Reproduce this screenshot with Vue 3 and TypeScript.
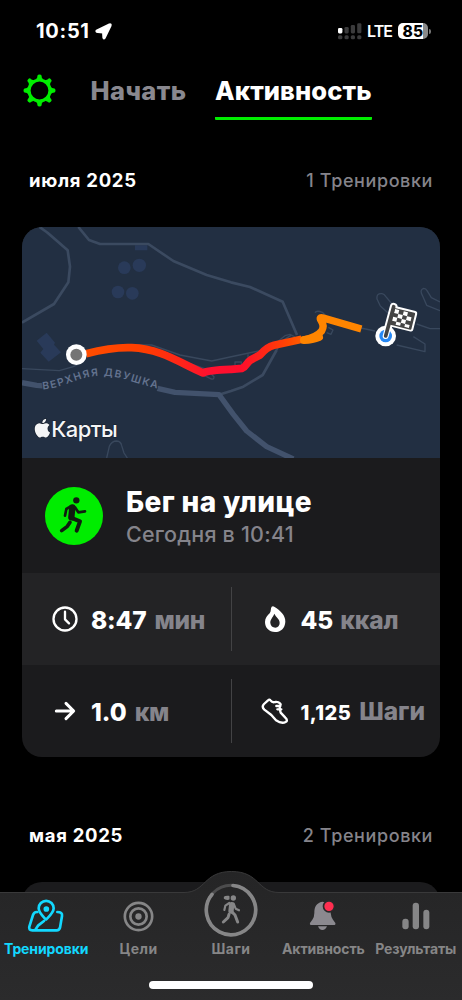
<script setup lang="ts">
interface Tab {
  id: string
  label: string
}

const tabs: Tab[] = [
  { id: 'workouts', label: 'Тренировки' },
  { id: 'goals', label: 'Цели' },
  { id: 'steps', label: 'Шаги' },
  { id: 'activity', label: 'Активность' },
  { id: 'results', label: 'Результаты' },
]
const activeTab = 'workouts'
const gearTeeth: number[] = [0, 45, 90, 135, 180, 225, 270, 315]
</script>

<template>
  <div class="screen">
    <header class="status">
      <span class="time">10:51</span>
      <svg class="locate" viewBox="286 66 52 53"><path d="M290 89 L330 70 Q337 68 334.500 75 L316 113 Q313 118 311 112 L310 96 L294 95 Q287 93 290 89Z" fill="#fff" stroke="#fff" stroke-width="5" stroke-linejoin="round" /></svg>
      <svg class="signal" viewBox="0 0 24 17">
        <rect x="0" y="5" width="4.4" height="5.4" rx="1.3" fill="#fff" />
        <g fill="#3b3b3c">
          <rect x="6.5" y="4" width="4.2" height="6.4" rx="1.3" /><rect x="12.8" y="2" width="4.2" height="8.4" rx="1.3" /><rect x="19.2" y="0.3" width="4.2" height="10" rx="1.3" />
          <rect x="0" y="12.3" width="4.4" height="4" rx="1.5" /><rect x="6.5" y="12.3" width="4.2" height="4" rx="1.5" /><rect x="12.8" y="12.3" width="4.2" height="4" rx="1.5" /><rect x="19.2" y="12.3" width="4.2" height="4" rx="1.5" />
        </g>
      </svg>
      <span class="lte">LTE</span>
      <span class="battery"><b>85</b></span>
      <i class="nub"></i>
    </header>

    <nav class="top">
      <svg class="gear" viewBox="-16.5 -16.5 33 33">
        <circle r="10.5" fill="none" stroke="#00ed00" stroke-width="3.2" />
        <path v-for="a in gearTeeth" :key="a" :transform="`rotate(${a})`" d="M-3.7 -11.2 Q-2 -12 -2 -15 Q-1.6 -16 0 -16 Q1.6 -16 2 -15 Q2 -12 3.7 -11.2Z" fill="#00ed00" />
      </svg>
      <span class="section start">Начать</span>
      <span class="section current">Активность</span>
    </nav>

    <div class="month first"><h2>июля 2025</h2><span>1 Тренировки</span></div>

    <article class="card">
      <svg class="map" viewBox="6 6 1254 693">
        <defs>
          <linearGradient id="pace" gradientUnits="userSpaceOnUse" x1="200" y1="0" x2="860" y2="0">
            <stop offset="0" stop-color="#ff4d00" /><stop offset=".26" stop-color="#ff3d00" />
            <stop offset=".42" stop-color="#ff2618" /><stop offset=".56" stop-color="#ff1030" />
            <stop offset=".7" stop-color="#ff0e2c" /><stop offset=".82" stop-color="#ff2a14" />
            <stop offset=".92" stop-color="#ff4800" /><stop offset="1" stop-color="#ff6500" />
          </linearGradient>
          <path id="street" d="M68 493 C130 490 180 453 240 452 C305 451 350 480 430 494" />
        </defs>
        <rect x="0" y="0" width="1266" height="705" fill="#222f42" />
        <g fill="#293a59">
          <circle cx="313" cy="128" r="19" /><circle cx="358" cy="121" r="20" /><circle cx="294" cy="201" r="19" /><circle cx="337" cy="205" r="19" />
          <path d="M345 61 H382 V76 H345Z M50 347 L80 323 L105 353 L102 359 L123 382 L86 410 L61 383 L70 372Z" />
        </g>
        <g fill="none" stroke="#3b4a60" stroke-width="8" stroke-linejoin="round">
          <path d="M58 6 Q80 20 100 38 L143 76 L150 125 L145 172 L102 237 L6 293" />
          <path d="M175 6 L207 45 L240 57 H385 L460 108 L560 150 L633 172 L690 186 L788 230 L831 330" />
          <path d="M597 509 L633 498 L670 485 L728 450 L770 375" />
          <path d="M770 375 L783 350 L813 331" stroke-width="5" />
        </g>
        <path d="M6 473 L50 481 L75 483 M412 490 L465 502 L597 509 L640 568 L680 618 L740 665 L820 702" fill="none" stroke="#42526c" stroke-width="16" stroke-linejoin="round" />
        <g fill="none" stroke="#39485d" stroke-width="4" stroke-linejoin="round">
          <path d="M6 431 L118 437 L160 425 L190 410 M330 360 L395 360 L480 390 L575 408 L630 396 L730 375 M470 402 L560 433 L582 455 Q582 467 570 460 L542 446" />
          <path d="M260 699 L268 664 Q275 648 290 648 Q303 649 305 662 L312 684 L322 699" />
          <path d="M645 420 V411 H664 V420 M684 388 V399 M733 381 L795 332 L810 328 L825 336" />
          <path d="M885 263 Q890 255 907 262 L929 284 M920 323 L933 328 L939 315 L925 307 M1023 309 L1065 318 M1130 360 L1215 380 V357 L1180 335" />
          <path d="M1105 265 L1081 243 L1071 222 Q1069 204 1086 206 Q1093 207 1097 214 L1116 237 M1190 297 L1230 311 H1260 M1260 257 L1220 241 L1207 211 Q1198 195 1211 190 Q1218 190 1221 197 L1234 218 L1260 231" />
        </g>
        <text class="street"><textPath href="#street" textLength="354">ВЕРХНЯЯ ДВУШКА</textPath></text>
        <path d="M198 386 C265 369 310 367 335 368 C420 371 477 412 549 444 C566 435 603 434 633 433 L666 430 C680 425 679 413 692 405 L720 390 C732 376 742 366 762 361 L845 343" fill="none" stroke="url(#pace)" stroke-width="23" stroke-linejoin="round" />
        <g fill="none" stroke="#ff8500" stroke-linejoin="round">
          <path d="M1024 312 L910 279 Q895 274 904 288 Q914 302 905 318 Q890 337 850 345" stroke-width="22" />
          <path d="M852 345 Q878 344 897 336" stroke-width="24" stroke-linecap="round" />
        </g>
        <circle cx="169" cy="389" r="31" fill="#fff" /><circle cx="169" cy="389" r="18" fill="#747474" />
        <path d="M1104 308 L1121 245" fill="none" stroke="#fff" stroke-width="23" stroke-linecap="round" />
        <circle cx="1097" cy="333" r="31" fill="#fff" /><circle cx="1097" cy="333" r="19" fill="#2688f5" />
        <path d="M1097 333 L1106 300" fill="none" stroke="#fff" stroke-width="18" stroke-linecap="round" />
        <g transform="translate(1121 248) rotate(14)">
          <rect x="-3" y="-6" width="76" height="63" rx="7" fill="#fff" />
          <rect x="0" y="0" width="67" height="52" rx="3" fill="#444" />
          <path d="M5 3 H18 V15 H5Z M32 3 H45 V15 H32Z M18 15 H32 V27 H18Z M45 15 H59 V27 H45Z M5 27 H18 V39 H5Z M32 27 H45 V39 H32Z M18 39 H32 V48 H18Z M45 39 H59 V48 H45Z" fill="#fff" />
        </g>
        <path d="M1097 333 L1121 245" fill="none" stroke="#444" stroke-width="11" stroke-linecap="round" />
        <g class="maps-logo">
          <path transform="translate(39 581) scale(2.35)" stroke-width="1.4" d="M12.152 6.896c-.948 0-2.415-1.078-3.96-1.04-2.04.027-3.91 1.183-4.961 3.014-2.117 3.675-.546 9.103 1.519 12.09 1.013 1.454 2.208 3.09 3.792 3.039 1.52-.065 2.09-.987 3.935-.987 1.831 0 2.35.987 3.96.948 1.637-.026 2.676-1.48 3.676-2.948 1.156-1.688 1.636-3.325 1.662-3.415-.039-.013-3.182-1.221-3.22-4.857-.026-3.04 2.48-4.494 2.597-4.559-1.429-2.09-3.623-2.324-4.39-2.376-2-.156-3.675 1.09-4.61 1.09zM15.53 3.83c.843-1.012 1.4-2.427 1.245-3.83-1.207.052-2.662.805-3.532 1.818-.78.896-1.454 2.338-1.273 3.714 1.338.104 2.715-.688 3.559-1.701" />
          <text x="94" y="635" textLength="199">Карты</text>
        </g>
      </svg>

      <div class="summary">
        <svg class="runner" viewBox="74 93 174 174">
          <circle cx="161" cy="180" r="87" fill="#00ed00" />
          <g fill="none" stroke="#101c10" stroke-linecap="round" stroke-linejoin="round">
            <circle cx="168" cy="133" r="9.5" fill="#101c10" stroke="none" />
            <path d="M156 154 L153 184" stroke-width="19" />
            <path d="M151 151 L138 159 L134 179 M164 154 L174 169 L194 166" stroke-width="8" />
            <path d="M157 187 L179 196 L169 224" stroke-width="12" />
            <path d="M149 199 L141 211 L124 224" stroke-width="11" />
          </g>
        </svg>
        <div class="names"><h3>Бег на улице</h3><p>Сегодня в 10:41</p></div>
      </div>

      <div class="stats lighter">
        <div class="stat">
          <svg viewBox="97 109 78 78" fill="none" stroke="#fff" stroke-width="7" stroke-linecap="round" stroke-linejoin="round"><circle cx="136" cy="148" r="34.5" /><path d="M136 126 V149 L148 161" /></svg>
          <p><b class="s-time">8:47</b><span>мин</span></p>
        </div>
        <i></i>
        <div class="stat">
          <svg viewBox="91 109 78 78"><path fill-rule="evenodd" d="M120 111 Q124 108 129 112 C145 122 162 137 161 156 C160 176 147 187 130 187 C112 187 100 174 100 157 C100 146 107 138 114 131 C119 125 116 116 120 111Z M128 132 C123 144 115 150 116 160 C117 169 123 174 131 174 C139 174 144 168 144 160 C144 147 133 143 128 132Z" fill="#fff" /></svg>
          <p><b>45</b><span class="u-cal">ккал</span></p>
        </div>
      </div>
      <div class="stats">
        <div class="stat">
          <svg viewBox="97 386 78 78" fill="none" stroke="#fff" stroke-width="9" stroke-linecap="round" stroke-linejoin="round"><path d="M110 425 H160 M139 402 L162 425 L139 448" /></svg>
          <p><b>1.0</b><span>км</span></p>
        </div>
        <i></i>
        <div class="stat">
          <svg viewBox="91 386 78 78" fill="none" stroke="#fff" stroke-width="7" stroke-linecap="round" stroke-linejoin="round"><path d="M109 393 Q114 388 117 394 Q122 401 131 398 Q140 397 145 402 Q149 405 145 409 L144 419 L147 430 L161 445 Q170 454 162 458 C150 464 139 457 133 453 L119 437 L98 421 Q89 412 97 404Z M134 410 H146 M137 420 H149" /></svg>
          <p><b class="s-steps">1,125</b><span class="u-steps">Шаги</span></p>
        </div>
      </div>
    </article>

    <div class="month second"><h2>мая 2025</h2><span>2 Тренировки</span></div>
    <article class="card next"></article>

    <footer class="tabbar">
      <svg class="backdrop" viewBox="0 0 462 129">
        <defs><linearGradient id="bar" x1="0" y1="0" x2="0" y2="1"><stop offset="0" stop-color="#252526" /><stop offset="1" stop-color="#2b2b2c" /></linearGradient></defs>
        <path d="M-2 21.5 H184 C206 21.5 203 .5 231.500 .5 C260 .5 257 21.500 279 21.500 H464 V131 H-2Z" fill="url(#bar)" stroke="#39393a" stroke-width="1" />
      </svg>
      <nav>
        <div v-for="tab in tabs" :key="tab.id" class="tab" :class="[tab.id, { on: tab.id === activeTab }]">
          <div class="icon">
            <svg v-if="tab.id === 'workouts'" width="38" height="36" viewBox="83 248 114 108" fill="none" stroke="currentColor" stroke-width="8" stroke-linecap="round" stroke-linejoin="round">
              <path d="M140 313 C130 302 118 292 118 279 A22.500 22.500 0 0 1 163 279 C163 292 151 302 140 313Z" /><circle cx="141" cy="281" r="8.500" fill="currentColor" stroke="none" />
              <path d="M114 290 Q104 289 101 299 L90 334 Q87 345 99 345 H172 Q180 345 182 337 L188 302 Q190 290 174 290 M109 342 L117 330 L134 317" />
            </svg>
            <svg v-else-if="tab.id === 'goals'" width="31" height="31" viewBox="-46.500 -46.500 93 93" fill="none" stroke="currentColor" stroke-width="8"><circle r="41" /><circle r="24.500" /><circle r="9.500" fill="currentColor" stroke="none" /></svg>
            <svg v-else-if="tab.id === 'steps'" width="54" height="54" viewBox="26 54 162 162" fill="none" stroke="currentColor" stroke-linecap="round" stroke-linejoin="round">
              <circle cx="107" cy="135" r="74" stroke="#4c4c4d" stroke-width="9" />
              <path d="M113 61.500 A74 74 0 1 1 50 88" stroke-width="11" />
              <circle cx="114" cy="99" r="8" fill="currentColor" stroke="none" />
              <path d="M88 97 Q90 94 100 95 V102 Q90 103 88 100Z" fill="currentColor" stroke-width="5" />
              <path d="M109 119 L107 138" stroke-width="16" />
              <path d="M102 114 L90 122 L87 135 M115 116 L121 131 L131 136" stroke-width="6.500" />
              <path d="M109 140 L119 150 L127 171 M101 148 L98 158 L84 171" stroke-width="9" />
            </svg>
            <svg v-else-if="tab.id === 'activity'" width="30" height="32" viewBox="231 258 90 96">
              <path d="M237 327 L244 317 Q250 309 250 297 C250 277 256 267 274 263 C292 266 298 277 299 297 Q300 309 306 317 L313 327 Q315 333 308 333 H242 Q235 333 237 327Z M261 337 H288 Q284 348 274 348 Q265 348 261 337Z" fill="#8b898f" />
              <circle cx="294" cy="277" r="16.500" fill="#ff2e50" stroke="#29292a" stroke-width="5" />
            </svg>
            <svg v-else width="30" height="30" viewBox="512 258 90 90" fill="currentColor"><rect x="516" y="311" width="19" height="32" rx="9" /><rect x="547" y="263" width="19" height="80" rx="9" /><rect x="579" y="284" width="18" height="59" rx="9" /></svg>
          </div>
          <span>{{ tab.label }}</span>
        </div>
      </nav>
      <i class="home"></i>
    </footer>
  </div>
</template>

<style>
html, body { margin: 0; background: #000; }
</style>

<style scoped>
.screen { position: relative; width: 462px; height: 1000px; overflow: hidden; background: #000; color: #fff; font-family: Inter, "Liberation Sans", sans-serif; display: flex; flex-direction: column; }
h2, h3, p { margin: 0; white-space: nowrap; }
svg { display: block; flex: none; overflow: visible; }
.status { height: 62px; flex: none; box-sizing: border-box; padding: 0 31px 0 36px; display: flex; align-items: center; }
.time { font-size: 20px; font-weight: 700; width: 59px; letter-spacing: .7px; }
.locate { width: 17px; height: 17px; }
.signal { width: 24px; height: 17px; margin-left: auto; }
.lte { font-size: 16px; font-weight: 600; margin-left: 5px; width: 26px; letter-spacing: -.9px; }
.battery { width: 30px; height: 16.500px; margin-left: 5px; border-radius: 5px; display: flex; align-items: center; justify-content: center; background: linear-gradient(90deg, #fff 85%, #8a8a8a 85%); color: #000; font-size: 15.500px; }
.battery b { font-weight: 800; letter-spacing: .2px; }
.nub { width: 2px; height: 5px; margin-left: 1px; border-radius: 0 2px 2px 0; background: #777; }
.top { height: 58px; flex: none; display: flex; align-items: flex-start; padding-left: 22.500px; }
.gear { width: 33px; height: 33px; margin-top: 11.500px; }
.section { font-size: 25.500px; line-height: 30px; margin-top: 14px; font-weight: 800; white-space: nowrap; }
.start { color: #89888f; margin-left: 35px; width: 95px; letter-spacing: .4px; }
.current { margin-left: 29.500px; width: 157px; height: 41px; border-bottom: 3px solid #00ed00; border-radius: 1px; letter-spacing: .1px; }
.month { display: flex; justify-content: space-between; align-items: center; flex: none; padding: 0 29px; height: 24px; }
.month h2 { font-size: 18.500px; font-weight: 700; letter-spacing: .7px; }
.month span { font-size: 18px; font-weight: 550; color: #85848b; letter-spacing: .6px; }
.first { margin-top: 48px; }
.second { margin-top: 66px; }
.card { width: 418px; flex: none; margin: 35px 0 0 22px; border-radius: 20px; overflow: hidden; background: #1b1b1d; }
.next { height: 130px; }
.map { width: 418px; height: 231px; overflow: hidden; }
.street { font-size: 31px; font-weight: 600; fill: #64738f; stroke: #222f42; stroke-width: 5px; paint-order: stroke; }
.maps-logo { fill: #f4f5f6; stroke: #151e2b; stroke-width: 3px; paint-order: stroke; font-size: 66px; font-weight: 500; }
.summary { height: 115px; display: flex; align-items: center; padding-left: 22.500px; }
.runner { width: 58px; height: 58px; }
.names { margin: 2px 0 0 23.500px; }
.names h3 { font-size: 28px; line-height: 34px; font-weight: 800; letter-spacing: .4px; }
.names p { font-size: 21.500px; line-height: 30px; font-weight: 500; color: #85848b; letter-spacing: .2px; }
.stats { display: grid; grid-template-columns: 209px 1px 1fr; height: 92px; align-items: center; }
.lighter { background: #232325; }
.stats > i { width: 1px; height: 64px; background: #434345; }
.stat { display: flex; align-items: center; padding-left: 30px; height: 92px; }
.stat svg { width: 26px; height: 26px; }
.stats > i + .stat { padding-left: 29.500px; }
.stat p { display: flex; align-items: baseline; margin: 2px 0 0 13px; font-size: 24.500px; line-height: 32px; }
.stat p b { font-weight: 800; }
.stat p .s-time { letter-spacing: -.2px; }
.stat p span { color: #85848b; font-weight: 800; margin-left: 8px; letter-spacing: -.25px; }
.stat p .u-cal { margin-left: 7px; }
.stat p .s-steps { font-size: 20px; letter-spacing: .4px; }
.stat p .u-steps { letter-spacing: 0; }
.tabbar { position: absolute; left: 0; bottom: 0; width: 462px; height: 129px; }
.backdrop { position: absolute; inset: 0; width: 462px; height: 129px; }
.tabbar nav { position: relative; display: grid; grid-template-columns: repeat(5, 92.400px); height: 110px; }
.tab { display: flex; flex-direction: column; align-items: center; color: #868687; }
.tab.on { color: #12d8ff; }
.icon { height: 69px; box-sizing: border-box; padding-top: 21px; display: flex; align-items: center; }
.steps .icon { padding-top: 9px; }
.tab span { font-size: 14px; line-height: 18px; font-weight: 700; white-space: nowrap; letter-spacing: -.1px; }
.goals span, .steps span { letter-spacing: .5px; }
.home { position: relative; display: block; width: 164px; height: 8px; margin: 0 auto; border-radius: 4px; background: #fff; }
</style>
